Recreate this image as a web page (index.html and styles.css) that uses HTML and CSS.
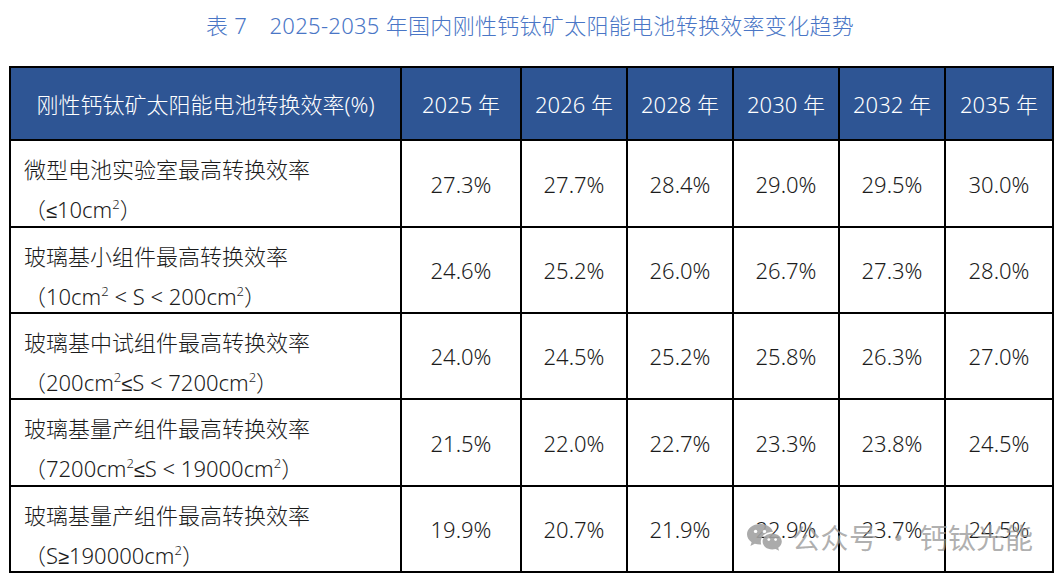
FILE: index.html
```html
<!DOCTYPE html>
<html lang="zh-CN">
<head>
<meta charset="utf-8">
<title>表 7 2025-2035 年国内刚性钙钛矿太阳能电池转换效率变化趋势</title>
<link rel="stylesheet" href="styles.css">
</head>
<body>
<div class="page">
  <h1 class="title">表 7　2025-2035 年国内刚性钙钛矿太阳能电池转换效率变化趋势</h1>
  <table class="eff">
    <colgroup>
      <col class="c-name"><col class="c-first"><col class="c-year"><col class="c-year"><col class="c-year"><col class="c-year"><col class="c-last">
    </colgroup>
    <thead>
      <tr class="head">
        <th>刚性钙钛矿太阳能电池转换效率(%)</th>
        <th>2025 年</th><th>2026 年</th><th>2028 年</th><th>2030 年</th><th>2032 年</th><th>2035 年</th>
      </tr>
    </thead>
    <tbody>
      <tr class="r87">
        <td class="name"><div class="label">微型电池实验室最高转换效率<br>（<span class="sym">≤</span>10cm<sup>2</sup>）</div></td>
        <td>27.3%</td><td>27.7%</td><td>28.4%</td><td>29.0%</td><td>29.5%</td><td>30.0%</td>
      </tr>
      <tr class="r86">
        <td class="name"><div class="label">玻璃基小组件最高转换效率<br>（10cm<sup>2</sup> &lt; S &lt; 200cm<sup>2</sup>）</div></td>
        <td>24.6%</td><td>25.2%</td><td>26.0%</td><td>26.7%</td><td>27.3%</td><td>28.0%</td>
      </tr>
      <tr class="r86">
        <td class="name"><div class="label">玻璃基中试组件最高转换效率<br>（200cm<sup>2</sup><span class="sym">≤</span>S &lt; 7200cm<sup>2</sup>）</div></td>
        <td>24.0%</td><td>24.5%</td><td>25.2%</td><td>25.8%</td><td>26.3%</td><td>27.0%</td>
      </tr>
      <tr class="r87">
        <td class="name"><div class="label">玻璃基量产组件最高转换效率<br>（7200cm<sup>2</sup><span class="sym">≤</span>S &lt; 19000cm<sup>2</sup>）</div></td>
        <td>21.5%</td><td>22.0%</td><td>22.7%</td><td>23.3%</td><td>23.8%</td><td>24.5%</td>
      </tr>
      <tr class="r86">
        <td class="name"><div class="label">玻璃基量产组件最高转换效率<br>（S<span class="sym">≥</span>190000cm<sup>2</sup>）</div></td>
        <td>19.9%</td><td>20.7%</td><td>21.9%</td><td>22.9%</td><td>23.7%</td><td>24.5%</td>
      </tr>
    </tbody>
  </table>
  <div class="watermark">
    <svg class="wx" width="36" height="28" viewBox="0 0 36 28">
      <path d="M14 1C6.8 1 1 5.6 1 11.3c0 3.2 1.8 6 4.6 7.9L4.4 23l4.4-2.3c1.6.5 3.3.7 5.2.7.4 0 .8 0 1.2 0-.3-.9-.4-1.8-.4-2.8 0-5.4 5.1-9.6 11.3-9.6h.9C25.8 4.5 20.4 1 14 1z" fill="#a3a3a3"/>
      <circle cx="9.6" cy="8.4" r="1.7" fill="#fff"/>
      <circle cx="18.4" cy="8.4" r="1.7" fill="#fff"/>
      <path d="M26.2 10.4c-5.3 0-9.6 3.6-9.6 8s4.3 8 9.6 8c1.2 0 2.3-.2 3.4-.5l3.5 1.9-.9-3.1c2.2-1.5 3.6-3.7 3.6-6.3 0-4.4-4.3-8-9.6-8z" fill="#a3a3a3"/>
      <circle cx="22.8" cy="16.6" r="1.4" fill="#fff"/>
      <circle cx="29.6" cy="16.6" r="1.4" fill="#fff"/>
    </svg>
    <span class="wm-text">公众号 · 钙钛光能</span>
  </div>
</div>
</body>
</html>
```

FILE: styles.css
```css
html, body {
  margin: 0;
  padding: 0;
  background: #ffffff;
}

.page {
  position: relative;
  width: 1060px;
  height: 581px;
  overflow: hidden;
  font-family: "Noto Sans", "Noto Sans CJK SC", sans-serif;
  font-weight: 300;
}

.title {
  margin: 0;
  padding-top: 10px;
  height: 30px;
  margin-bottom: 26px;
  line-height: 30px;
  text-align: center;
  font-size: 22px;
  font-weight: 300;
  color: #4a76c6;
  letter-spacing: 0.3px;
}

.eff {
  margin-left: 9px;
  border-collapse: collapse;
  table-layout: fixed;
  width: 1045px;
  border: 2px solid #000;
}

.c-name { width: 391px; }
.c-first { width: 120px; }
.c-year { width: 106px; }
.c-last { width: 108px; }

.eff th,
.eff td {
  border: 2px solid #000;
  padding: 0;
  font-size: 22px;
  font-weight: 300;
  text-align: center;
  vertical-align: middle;
}

.head {
  height: 73px;
}

.head th {
  background: #2e5594;
  color: #ffffff;
  line-height: 30px;
}

.r87 { height: 87px; }
.r86 { height: 86px; }

.eff td {
  color: #1c1c1c;
  line-height: 40px;
}

.eff td.name {
  text-align: left;
  vertical-align: top;
  padding-left: 13px;
  padding-top: 8px;
}

.label {
  height: 74px;
  line-height: 40px;
}

.eff sup {
  font-size: 13px;
  line-height: 0;
  vertical-align: 9px;
}

.sym {
  font-family: "Liberation Sans", sans-serif;
  font-size: 20px;
}

.watermark {
  position: absolute;
  left: 746px;
  top: 519px;
  display: flex;
  align-items: center;
  gap: 10px;
  pointer-events: none;
}

.wx {
  display: block;
  opacity: 0.9;
}

.wm-text {
  font-family: "Noto Sans CJK SC", sans-serif;
  font-size: 28px;
  line-height: 36px;
  font-weight: 400;
  color: rgba(150, 150, 150, 0.75);
  letter-spacing: 0.5px;
}
```
